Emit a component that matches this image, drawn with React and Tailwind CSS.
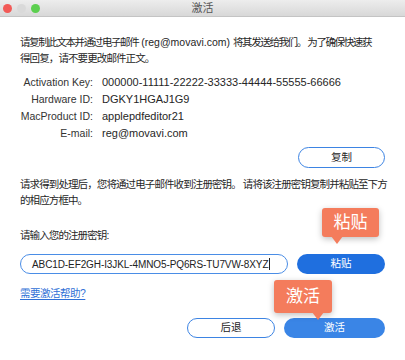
import React from "react";

const cjk = { fontFamily: '"Liberation Sans", "Noto Sans CJK SC", sans-serif' };

function Callout({ text, className, arrowLeft }) {
  return (
    <div className={"absolute " + className}>
      <div className="relative rounded-[3px] bg-[#f47c5c] text-white text-[17px] leading-none flex items-center justify-center h-full w-full shadow-[0_2px_6px_rgba(0,0,0,0.25)]">
        {text}
        <div
          className="absolute -bottom-[7px] w-0 h-0 border-l-[6px] border-r-[6px] border-t-[8px] border-l-transparent border-r-transparent border-t-[#f47c5c]"
          style={{ left: arrowLeft }}
        />
      </div>
    </div>
  );
}

export default function App() {
  return (
    <div className="relative w-[405px] h-[360px] bg-white text-[#262626] overflow-hidden" style={cjk}>
      {/* title bar */}
      <div className="relative h-[17px] bg-gradient-to-b from-[#ededed] to-[#d8d8d8] border-b border-[#c4c4c4] flex items-center">
        <div className="flex items-center gap-[5px] pl-[3px]">
          <span className="w-[9px] h-[9px] rounded-full bg-[#f25a57]" />
          <span className="w-[9px] h-[9px] rounded-full bg-[#d9d9d9]" />
          <span className="w-[9px] h-[9px] rounded-full bg-[#5ccf4f]" />
        </div>
        <div className="absolute inset-0 flex items-center justify-center text-[11px] text-[#555]">激活</div>
      </div>

      <div className="px-5 pt-[17px] text-[10.5px]">
        <div className="leading-[16px] whitespace-nowrap">
          <div>
            <span className="tracking-[-1.4px]">请复制此文本并通过电子邮件</span>
            <span> (reg@movavi.com) </span>
            <span className="tracking-[-1.4px]">将其发送给我们。 为了确保快速获</span>
          </div>
          <div className="tracking-[-0.9px]">得回复，请不要更改邮件正文。</div>
        </div>

        <div className="mt-[8px] leading-[17px]">
          {[
            ["Activation Key:", "000000-11111-22222-33333-44444-55555-66666"],
            ["Hardware ID:", "DGKY1HGAJ1G9"],
            ["MacProduct ID:", "applepdfeditor21"],
            ["E-mail:", "reg@movavi.com"],
          ].map(([k, v]) => (
            <div key={k} className="flex whitespace-nowrap">
              <div className="w-[73px] flex justify-end text-[#333] text-[10.5px]">{k}</div>
              <div className="pl-[9px] text-[11px]">{v}</div>
            </div>
          ))}
        </div>

        <div className="flex justify-end mt-[5px]">
          <div className="w-[87px] h-[21px] rounded-full border-[1.5px] border-[#3d84e3] bg-white flex items-center justify-center text-[10.5px]">
            复制
          </div>
        </div>

        <div className="mt-[8px] leading-[16px] whitespace-nowrap tracking-[-0.9px]">
          <div>请求得到处理后，您将通过电子邮件收到注册密钥。 请将该注册密钥复制并粘贴至下方</div>
          <div>的相应方框中。</div>
        </div>

        <div className="mt-[19px] leading-[16px] tracking-[-0.9px]">请输入您的注册密钥:</div>

        <div className="flex items-center mt-[11px] gap-[9px]">
          <div className="w-[268px] h-[20px] shrink-0 rounded-full border-[1.5px] border-[#4a8de6] flex items-center pl-[11px] text-[10px] tracking-[-0.1px] text-[#222] whitespace-nowrap overflow-hidden">
            ABC1D-EF2GH-I3JKL-4MNO5-PQ6RS-TU7VW-8XYZ
            <span className="inline-block w-px h-[12px] bg-[#222] ml-[1px]" />
          </div>
          <div className="w-[88px] h-[20px] rounded-full bg-[#1f6fdf] text-white flex items-center justify-center text-[10.5px]">
            粘贴
          </div>
        </div>

        <div className="mt-[11px] leading-[16px] tracking-[-0.5px]">
          <span className="text-[#2f6fd6] underline underline-offset-2">需要激活帮助?</span>
        </div>

        <div className="flex justify-end gap-[9px] mt-[17px]">
          <div className="w-[88px] h-[20px] rounded-full border-[1.5px] border-[#3d84e3] bg-white flex items-center justify-center">
            后退
          </div>
          <div className="w-[101px] h-[20px] rounded-full bg-[#3a85e6] text-white flex items-center justify-center">
            激活
          </div>
        </div>
      </div>

      <Callout text="粘贴" className="left-[322px] top-[208px] w-[57px] h-[29px]" arrowLeft="9px" />
      <Callout text="激活" className="left-[274px] top-[280px] w-[58px] h-[33px]" arrowLeft="38px" />
    </div>
  );
}
